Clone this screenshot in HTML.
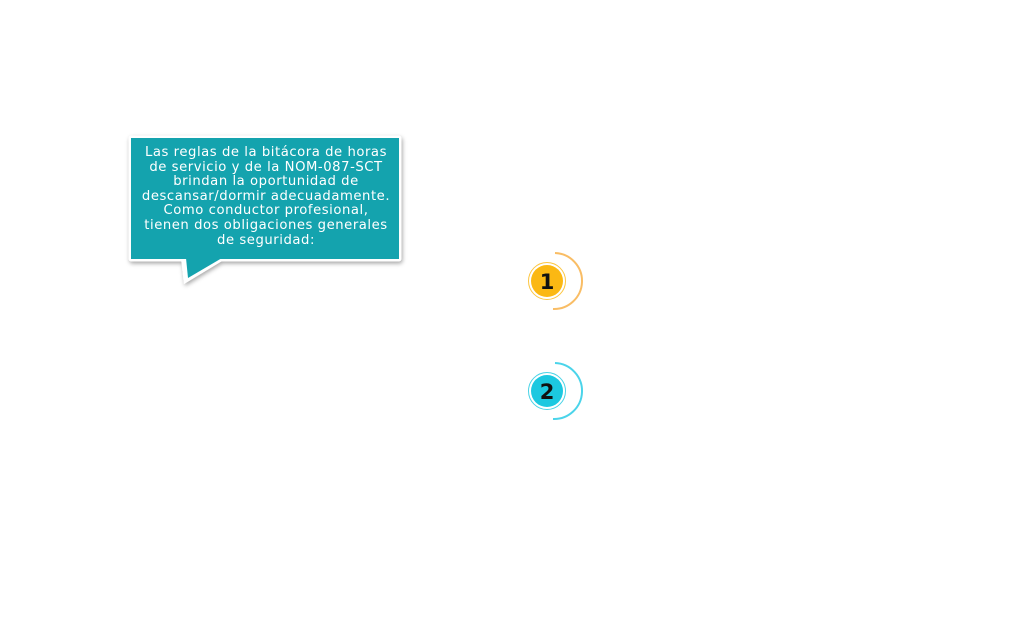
<!DOCTYPE html>
<html><head><meta charset="utf-8"><style>
html,body{margin:0;padding:0;background:#fff;width:1025px;height:621px;overflow:hidden;position:relative}
.txt{position:absolute;left:128px;top:146px;width:276px;text-align:center;color:#fff;font-family:"DejaVu Sans",sans-serif;font-size:13.2px;line-height:14.6px;letter-spacing:0.55px;white-space:nowrap}
</style></head><body>
<svg style="position:absolute;left:0;top:0" width="1025" height="621">
<defs><filter id="s" x="-20%" y="-20%" width="140%" height="140%"><feDropShadow dx="1" dy="2" stdDeviation="2" flood-opacity=".35"/></filter></defs>
<g filter="url(#s)">
<rect x="128.5" y="135.5" width="273" height="126" rx="3" fill="#fff"/>
<path d="M181 258 L184 284 L227 258 Z" fill="#fff"/>
</g>
<rect x="131" y="138" width="268" height="121" fill="#14a3ae"/>
<path d="M186 258 L188 278 L222 258 Z" fill="#14a3ae"/>
<g>
<circle cx="547" cy="281" r="16" fill="#fbb813"/>
<circle cx="547" cy="281" r="18.5" fill="none" stroke="#fbb813" stroke-width="1" opacity=".8"/>
<path d="M555 253 A28 28 0 0 1 553 309" fill="none" stroke="#f8b24a" stroke-width="2" opacity=".85"/>
<text x="547" y="289" text-anchor="middle" font-family="DejaVu Sans,sans-serif" font-weight="bold" font-size="21" fill="#111">1</text>
<circle cx="547" cy="391" r="16" fill="#1cc8e0"/>
<circle cx="547" cy="391" r="18.5" fill="none" stroke="#1cc8e0" stroke-width="1" opacity=".8"/>
<path d="M555 363 A28 28 0 0 1 553 419" fill="none" stroke="#2bcde6" stroke-width="2" opacity=".85"/>
<text x="547" y="399" text-anchor="middle" font-family="DejaVu Sans,sans-serif" font-weight="bold" font-size="21" fill="#111">2</text>
</g>
</svg>
<div class="txt">Las reglas de la bitácora de horas<br>de servicio y de la NOM-087-SCT<br>brindan la oportunidad de<br>descansar/dormir adecuadamente.<br>Como conductor profesional,<br>tienen dos obligaciones generales<br>de seguridad:</div>
</body></html>
